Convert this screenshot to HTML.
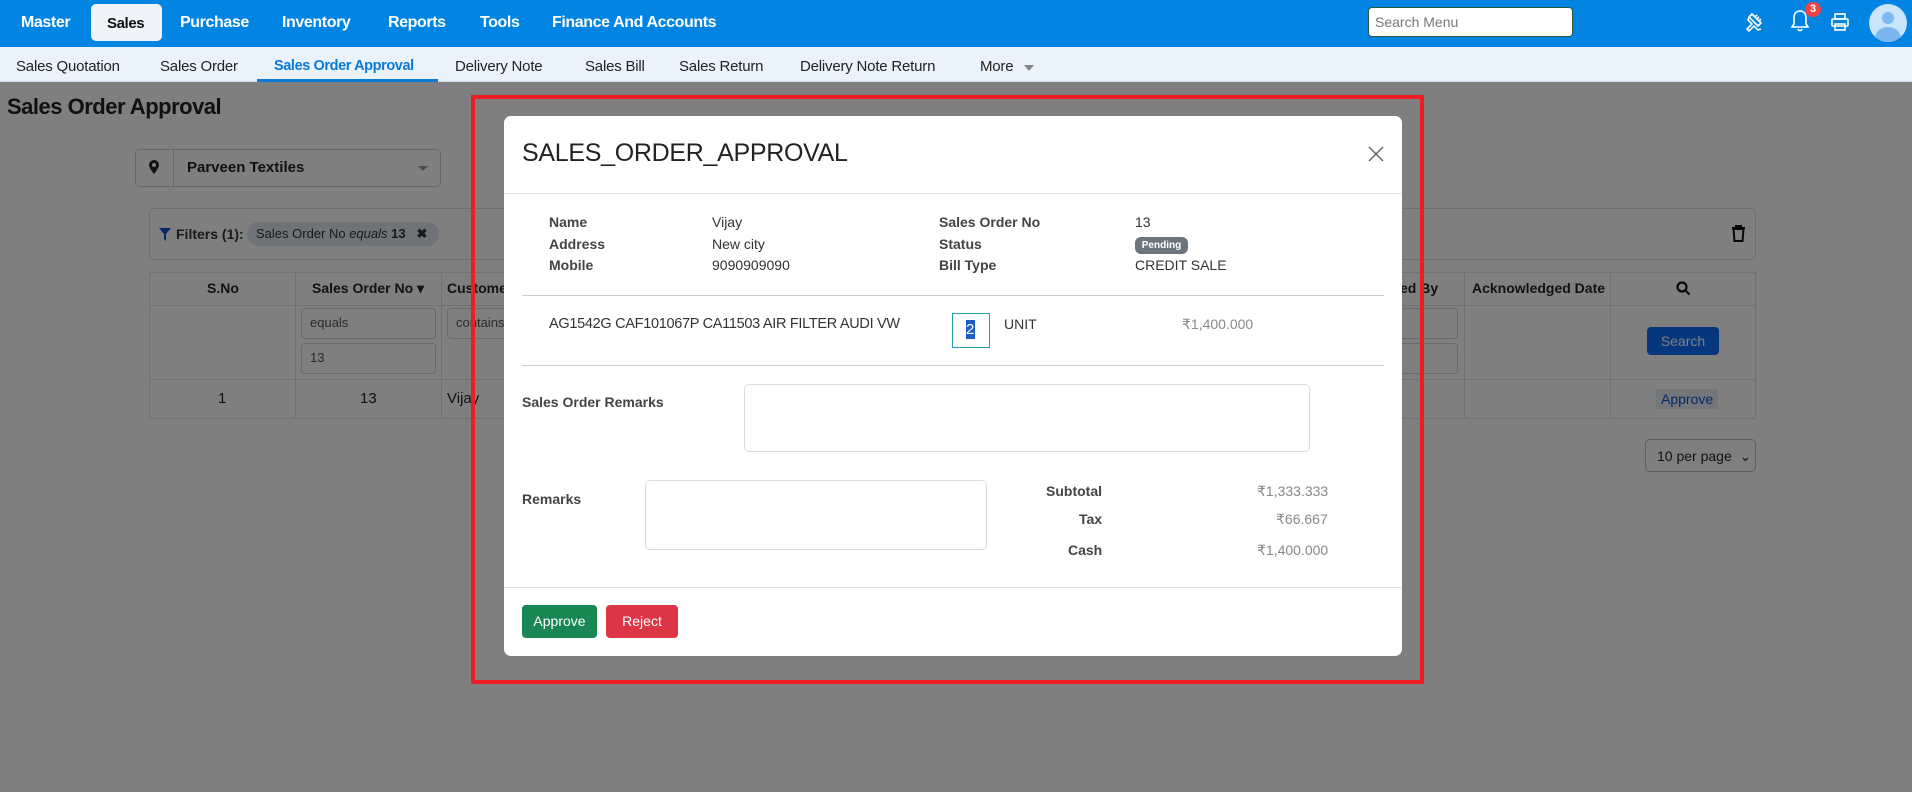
<!DOCTYPE html>
<html><head><meta charset="utf-8">
<style>
*{box-sizing:border-box;margin:0;padding:0}
body{width:1912px;height:792px;position:relative;overflow:hidden;background:#fff;font-family:"Liberation Sans",Arial,sans-serif;color:#212529}
.a{position:absolute;white-space:nowrap}
.nav{left:0;top:0;width:1912px;height:47px;background:#0284e3}
.nv{top:14px;font-size:16px;font-weight:bold;color:#fff;letter-spacing:-0.4px}
.sub{left:0;top:47px;width:1912px;height:35px;background:#eaf2fb;border-bottom:1px solid #cfdbe6}
.sn{top:58px;font-size:15px;color:#222;letter-spacing:-0.2px}
.ov{left:0;top:82px;width:1912px;height:710px;background:rgba(0,0,0,0.5)}
.cell{position:absolute;border:1px solid #dee2e6}
.th{font-weight:bold;font-size:14px}
.inp{position:absolute;border:1px solid #ced4da;border-radius:4px;background:#fff;font-size:13px;color:#555;padding:6px 8px}
.modal{left:504px;top:116px;width:898px;height:540px;background:#fff;border-radius:7px}
.lb{font-size:14px;font-weight:bold;color:#444}
.vl{font-size:14px;color:#333}
.ta{position:absolute;border:1px solid #dcdcdc;border-radius:5px;background:#fff}
</style></head><body>
<div class="a nav"></div>
<div class="a nv" style="left:21px">Master</div>
<div class="a" style="left:91px;top:4px;width:71px;height:37px;background:#f0f4f8;border-radius:5px"></div>
<div class="a nv" style="left:107px;color:#111;font-size:15px;top:15px">Sales</div>
<div class="a nv" style="left:180px">Purchase</div>
<div class="a nv" style="left:282px">Inventory</div>
<div class="a nv" style="left:388px">Reports</div>
<div class="a nv" style="left:480px">Tools</div>
<div class="a nv" style="left:552px">Finance And Accounts</div>
<div class="a" style="left:1368px;top:7px;width:205px;height:30px;background:#fff;border:1px solid #2a5a3a;border-radius:4px;font-size:14px;color:#777;padding:6px 6px">Search Menu</div>
<svg class="a" style="left:1742px;top:9px" width="26" height="26" viewBox="0 0 26 26" fill="none" stroke="#fff" stroke-width="1.6"><path d="M10 5l9 9-3 3-9-9z M13 8l2-2 M15 10l2-2 M17 12l2-2 M7 8l-1 3 4 4-5 5 2 2 5-5 4 4 3-1"/></svg>
<svg class="a" style="left:1789px;top:8px" width="22" height="26" viewBox="0 0 22 26" fill="none" stroke="#fff" stroke-width="1.6"><path d="M11 3c-4 0-6 3-6 7v6l-2 3h16l-2-3v-6c0-4-2-7-6-7z M9 21c0 2 4 2 4 0"/></svg>
<div class="a" style="left:1805px;top:2px;width:16px;height:15px;border-radius:8px;background:#ef4444;color:#fff;font-size:11px;font-weight:bold;text-align:center;line-height:15px">3</div>
<svg class="a" style="left:1830px;top:12px" width="20" height="20" viewBox="0 0 20 20" fill="none" stroke="#fff" stroke-width="1.6"><rect x="5" y="2" width="10" height="5"/><rect x="2" y="7" width="16" height="7" rx="1"/><rect x="5" y="12" width="10" height="6"/></svg>
<svg class="a" style="left:1869px;top:4px" width="38" height="38" viewBox="0 0 38 38"><circle cx="19" cy="19" r="19" fill="#c9e4fb"/><circle cx="19" cy="14" r="6" fill="#7ab8ef"/><path d="M6 32c3-7 8-9 13-9s10 2 13 9c-3 4-8 6-13 6s-10-2-13-6z" fill="#7ab8ef"/></svg>
<div class="a sub"></div>
<div class="a sn" style="left:16px">Sales Quotation</div>
<div class="a sn" style="left:160px">Sales Order</div>
<div class="a sn" style="left:274px;color:#0b7ad6;font-weight:bold;font-size:14.5px;letter-spacing:-0.4px">Sales Order Approval</div>
<div class="a" style="left:257px;top:79px;width:181px;height:3px;background:#0b7ad6"></div>
<div class="a sn" style="left:455px">Delivery Note</div>
<div class="a sn" style="left:585px">Sales Bill</div>
<div class="a sn" style="left:679px">Sales Return</div>
<div class="a sn" style="left:800px">Delivery Note Return</div>
<div class="a sn" style="left:980px">More</div>
<div class="a" style="left:1024px;top:65px;border:5px solid transparent;border-top:6px solid #888"></div>
<div class="a" style="left:7px;top:94px;font-size:22px;font-weight:bold;letter-spacing:-0.5px;color:#222">Sales Order Approval</div>
<div class="a" style="left:135px;top:149px;width:306px;height:38px;border:1px solid #ccc;border-radius:4px"></div>
<div class="a" style="left:173px;top:150px;width:1px;height:36px;background:#ccc"></div>
<svg class="a" style="left:148px;top:159px" width="12" height="16" viewBox="0 0 12 16"><path d="M6 1a5 5 0 0 1 5 5c0 3-5 9-5 9s-5-6-5-9a5 5 0 0 1 5-5z" fill="#222"/><circle cx="6" cy="6" r="2" fill="#fff"/></svg>
<div class="a" style="left:187px;top:159px;font-size:15px;font-weight:bold;color:#222">Parveen Textiles</div>
<div class="a" style="left:418px;top:166px;border:5px solid transparent;border-top:5px solid #999"></div>
<div class="a" style="left:149px;top:208px;width:1607px;height:52px;border:1px solid #ddd;border-radius:5px"></div>
<svg class="a" style="left:159px;top:228px" width="12" height="13" viewBox="0 0 12 13"><path d="M0 0h12L7 6v7L5 11V6z" fill="#0b4fd0"/></svg>
<div class="a" style="left:176px;top:226px;font-size:14px;font-weight:bold;color:#333">Filters (1):</div>
<div class="a" style="left:247px;top:222px;width:192px;height:24px;border-radius:12px;background:#dfe7ef;font-size:13px;color:#333;padding:4px 9px">Sales Order No <i>equals</i> <b>13</b> &nbsp;&nbsp;<b>✖</b></div>
<svg class="a" style="left:1731px;top:225px" width="15" height="17" viewBox="0 0 15 17"><path d="M1 3h13M5 3V1h5v2M2.5 4h10l-1 12h-8z" fill="none" stroke="#111" stroke-width="2"/></svg>
<div class="cell" style="left:149px;top:272px;width:1607px;height:147px"></div>
<div class="a" style="left:149px;top:305px;width:1607px;height:1px;background:#dee2e6"></div>
<div class="a" style="left:149px;top:379px;width:1607px;height:1px;background:#dee2e6"></div>
<div class="a" style="left:295px;top:272px;width:1px;height:147px;background:#dee2e6"></div>
<div class="a" style="left:441px;top:272px;width:1px;height:147px;background:#dee2e6"></div>
<div class="a" style="left:1464px;top:272px;width:1px;height:147px;background:#dee2e6"></div>
<div class="a" style="left:1610px;top:272px;width:1px;height:147px;background:#dee2e6"></div>
<div class="a th" style="left:207px;top:280px">S.No</div>
<div class="a th" style="left:312px;top:280px">Sales Order No ▾</div>
<div class="a th" style="left:447px;top:280px">Customer</div>
<div class="a th" style="left:1400px;top:280px">ed By</div>
<div class="a th" style="left:1472px;top:280px">Acknowledged Date</div>
<svg class="a" style="left:1676px;top:281px" width="15" height="15" viewBox="0 0 15 15" fill="none" stroke="#111" stroke-width="2.2"><circle cx="6" cy="6" r="4.5"/><path d="M9.5 9.5l4 4"/></svg>
<div class="inp" style="left:301px;top:308px;width:135px;height:31px">equals</div>
<div class="inp" style="left:301px;top:343px;width:135px;height:31px">13</div>
<div class="inp" style="left:447px;top:308px;width:60px;height:31px">contains</div>
<div class="inp" style="left:1380px;top:308px;width:78px;height:31px"></div>
<div class="inp" style="left:1380px;top:343px;width:78px;height:31px"></div>
<div class="a" style="left:1647px;top:327px;width:72px;height:28px;background:#0d6efd;border-radius:4px;color:#fff;font-size:14px;text-align:center;line-height:28px">Search</div>
<div class="a" style="left:218px;top:390px;font-size:15px">1</div>
<div class="a" style="left:360px;top:390px;font-size:15px">13</div>
<div class="a" style="left:447px;top:390px;font-size:15px">Vijay</div>
<div class="a" style="left:1656px;top:389px;font-size:14px;color:#0b57d0;background:#e8eef5;padding:2px 5px">Approve</div>
<div class="a" style="left:1645px;top:439px;width:111px;height:33px;border:1px solid #bbb;border-radius:5px;font-size:14px;padding:8px 11px">10 per page &nbsp;⌄</div>
<div class="a ov"></div>
<div class="a" style="left:471px;top:95px;width:953px;height:589px;border:4px solid #ee1c25"></div>
<div class="a modal"></div>
<div class="a" style="left:522px;top:139px;font-size:25px;color:#222;letter-spacing:-0.3px">SALES_ORDER_APPROVAL</div>
<svg class="a" style="left:1368px;top:146px" width="16" height="16" viewBox="0 0 16 16" fill="none" stroke="#666" stroke-width="1.5"><path d="M1 1l14 14M15 1L1 15"/></svg>
<div class="a" style="left:504px;top:193px;width:898px;height:1px;background:#dee2e6"></div>
<div class="a lb" style="left:549px;top:214px">Name</div>
<div class="a lb" style="left:549px;top:236px">Address</div>
<div class="a lb" style="left:549px;top:257px">Mobile</div>
<div class="a vl" style="left:712px;top:214px">Vijay</div>
<div class="a vl" style="left:712px;top:236px">New city</div>
<div class="a vl" style="left:712px;top:257px">9090909090</div>
<div class="a lb" style="left:939px;top:214px">Sales Order No</div>
<div class="a lb" style="left:939px;top:236px">Status</div>
<div class="a lb" style="left:939px;top:257px">Bill Type</div>
<div class="a vl" style="left:1135px;top:214px">13</div>
<div class="a" style="left:1135px;top:237px;width:53px;height:17px;border-radius:6px;background:#6c757d;color:#fff;font-size:10px;font-weight:bold;text-align:center;line-height:17px">Pending</div>
<div class="a vl" style="left:1135px;top:257px">CREDIT SALE</div>
<div class="a" style="left:522px;top:295px;width:862px;height:1px;background:#ccc"></div>
<div class="a vl" style="left:549px;top:316px;font-size:14.5px;letter-spacing:-0.3px">AG1542G CAF101067P CA11503 AIR FILTER AUDI VW</div>
<div class="a" style="left:952px;top:313px;width:38px;height:35px;border:1px solid #20a0b0"></div>
<div class="a" style="left:966px;top:320px;width:9px;height:19px;background:#1a5fc8;color:#fff;font-size:15px;line-height:19px">2</div>
<div class="a vl" style="left:1004px;top:316px">UNIT</div>
<div class="a" style="left:1182px;top:316px;font-size:14px;color:#888">₹1,400.000</div>
<div class="a" style="left:522px;top:365px;width:862px;height:1px;background:#ccc"></div>
<div class="a lb" style="left:522px;top:394px">Sales Order Remarks</div>
<div class="ta" style="left:744px;top:384px;width:566px;height:68px"></div>
<div class="a lb" style="left:522px;top:491px">Remarks</div>
<div class="ta" style="left:645px;top:480px;width:342px;height:70px"></div>
<div class="a lb" style="left:1046px;top:483px">Subtotal</div>
<div class="a lb" style="left:1079px;top:511px">Tax</div>
<div class="a lb" style="left:1068px;top:542px">Cash</div>
<div class="a" style="left:1257px;top:483px;font-size:14px;color:#888">₹1,333.333</div>
<div class="a" style="left:1276px;top:511px;font-size:14px;color:#888">₹66.667</div>
<div class="a" style="left:1257px;top:542px;font-size:14px;color:#888">₹1,400.000</div>
<div class="a" style="left:504px;top:587px;width:898px;height:1px;background:#dee2e6"></div>
<div class="a" style="left:522px;top:605px;width:75px;height:33px;background:#198754;border-radius:4px;color:#fff;font-size:14px;text-align:center;line-height:33px">Approve</div>
<div class="a" style="left:606px;top:605px;width:72px;height:33px;background:#dc3545;border-radius:4px;color:#fff;font-size:14px;text-align:center;line-height:33px">Reject</div>
</body></html>
